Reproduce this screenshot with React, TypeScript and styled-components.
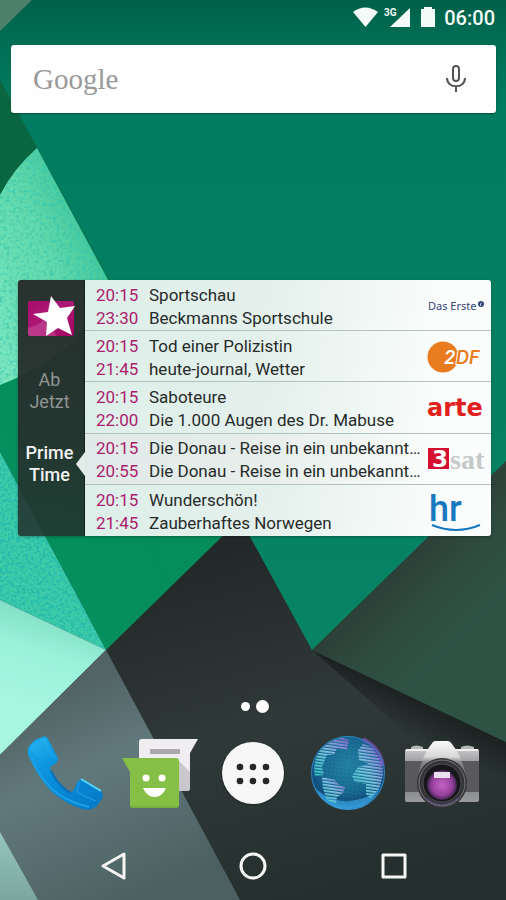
import React from 'react';
import styled, { createGlobalStyle } from 'styled-components';

const GlobalStyle = createGlobalStyle`
  *, *::before, *::after { box-sizing: border-box; }
  body { margin: 0; background: #2b3433; font-family: Roboto, "Liberation Sans", sans-serif; }
  button { border: 0; padding: 0; background: none; font: inherit; color: inherit; cursor: pointer; }
  svg { display: block; }
`;

const Screen = styled.div`
  position: relative;
  isolation: isolate;
  display: flex;
  flex-direction: column;
  min-height: 100vh;
  overflow: hidden;
`;

const WallpaperSvg = styled.svg`
  position: absolute;
  inset: 0;
  z-index: -1;
  width: 100%;
  height: 100%;
`;

const StatusBar = styled.header`
  display: flex;
  align-items: center;
  justify-content: flex-end;
  height: 36px;
  padding: 0 11px;
  color: #f4fbf8;
`;

const Clock = styled.time`
  margin-left: 8px;
  font-size: 20px;
  font-weight: 500;
  line-height: 24px;
`;

const SearchBar = styled.form`
  display: flex;
  align-items: center;
  height: 68px;
  margin: 9px 10px 0 11px;
  padding: 0 30px 0 22px;
  border-radius: 3px;
  background: #fefefe;
  box-shadow: 0 1px 2px rgba(0, 40, 25, 0.5);
`;

const SearchLabel = styled.label`
  color: #999;
  font-family: "Liberation Serif", serif;
  font-size: 29px;
  line-height: 36px;
`;

const SearchInput = styled.input`
  flex: 1;
  min-width: 0;
  height: 40px;
  border: 0;
  outline: 0;
  background: transparent;
  font: 18px Roboto, sans-serif;
`;

const Widget = styled.main`
  display: grid;
  grid-template-columns: 67px minmax(0, 1fr);
  min-height: 256px;
  margin: 167px 15px 0 18px;
  border-radius: 3px;
  box-shadow: 0 1px 3px rgba(0, 30, 20, 0.35);
`;

const Sidebar = styled.nav`
  display: flex;
  flex-direction: column;
  align-items: stretch;
  padding-top: 12px;
  border-right: 1px solid #14201c;
  border-radius: 3px 0 0 3px;
  background: linear-gradient(rgba(38, 44, 43, 0.97), rgba(39, 47, 45, 0.94) 50%, rgba(34, 50, 44, 0.86));
`;

const StarButton = styled.button`
  display: flex;
  justify-content: center;
  height: 50px;
`;

const PeriodButton = styled.button<{ $active?: boolean }>`
  position: relative;
  height: 44px;
  margin-top: ${(p) => (p.$active ? 29 : 27)}px;
  padding-right: 3px;
  color: ${(p) => (p.$active ? '#f3f3f3' : '#8f9593')};
  font-size: 18px;
  font-weight: ${(p) => (p.$active ? 500 : 400)};
  line-height: 22px;
  ${(p) =>
    p.$active &&
    `&::after {
      content: "";
      position: absolute;
      top: 10px;
      right: -1px;
      border: solid transparent;
      border-width: 12px 9px 12px 0;
      border-right-color: #e4ecea;
    }`}
`;

const Listings = styled.ul`
  display: grid;
  grid-auto-rows: 1fr;
  margin: 0;
  padding: 0;
  list-style: none;
`;

const Channel = styled.li`
  display: flex;
  align-items: center;
  min-width: 0;
  padding: 3px 4px 0 11px;
  border-bottom: 1px solid #b4c2be;
  background: linear-gradient(100deg, #deefe9, #e4f0ec 45%, #fafdfc 88%);
  &:first-child { border-top-right-radius: 3px; }
  &:nth-child(4) { background: linear-gradient(100deg, #e0eae8, #e7eeec 45%, #fafdfc 88%); }
  &:last-child { border-bottom: 0; border-bottom-right-radius: 3px; }
`;

const Programmes = styled.div`
  flex: 1;
  min-width: 0;
`;

const Programme = styled.div`
  display: flex;
  gap: 10px;
  font-size: 17px;
  line-height: 23px;
`;

const Start = styled.time`
  flex: none;
  width: 43px;
  color: #ab1c6d;
`;

const Title = styled.span`
  overflow: hidden;
  color: #262b2a;
  white-space: nowrap;
  text-overflow: ellipsis;
`;

const Pager = styled.div`
  display: flex;
  align-items: center;
  justify-content: center;
  gap: 6px;
  height: 14px;
  margin-top: auto;
  padding-left: 3px;
`;

const Dot = styled.span<{ $current?: boolean }>`
  width: ${(p) => (p.$current ? 13 : 9)}px;
  height: ${(p) => (p.$current ? 13 : 9)}px;
  border-radius: 50%;
  background: #fff;
`;

const Dock = styled.nav`
  display: grid;
  grid-template-columns: repeat(5, 1fr);
  justify-items: center;
  margin-top: 20px;
  padding: 0 18px;
`;

const NavBar = styled.nav`
  display: grid;
  grid-template-columns: repeat(3, 1fr);
  justify-items: center;
  align-items: center;
  height: 48px;
  margin-top: 29px;
  margin-bottom: 10px;
  padding: 0 42px;
`;

const Wallpaper = () => (
  <WallpaperSvg viewBox="0 0 506 900" preserveAspectRatio="none" aria-hidden="true">
    <defs>
      <linearGradient id="teal" x1="0" y1="0" x2="0" y2="1">
        <stop offset="0" stopColor="#005f49" />
        <stop offset=".06" stopColor="#006e55" />
        <stop offset=".17" stopColor="#007d61" />
        <stop offset="1" stopColor="#078464" />
      </linearGradient>
      <linearGradient id="mint" x1="0" y1="1" x2="1" y2="0">
        <stop offset="0" stopColor="#7ce8c2" />
        <stop offset=".5" stopColor="#62d9ac" />
        <stop offset="1" stopColor="#25b588" />
      </linearGradient>
      <linearGradient id="leaf" x1="0" y1="1" x2="1" y2="0">
        <stop offset="0" stopColor="#049160" />
        <stop offset=".6" stopColor="#058c59" />
        <stop offset="1" stopColor="#127346" />
      </linearGradient>
      <linearGradient id="pale" gradientUnits="userSpaceOnUse" x1="40" y1="615" x2="15" y2="700">
        <stop offset="0" stopColor="#84e0c6" />
        <stop offset=".4" stopColor="#9af2d9" />
        <stop offset="1" stopColor="#a6f6e0" />
      </linearGradient>
      <linearGradient id="slate" gradientUnits="userSpaceOnUse" x1="50" y1="700" x2="140" y2="900">
        <stop offset="0" stopColor="#526466" />
        <stop offset=".35" stopColor="#62797b" />
        <stop offset="1" stopColor="#4c6061" />
      </linearGradient>
      <linearGradient id="coal" gradientUnits="userSpaceOnUse" x1="200" y1="560" x2="290" y2="900">
        <stop offset="0" stopColor="#232929" />
        <stop offset=".5" stopColor="#2f3938" />
        <stop offset="1" stopColor="#25302e" />
      </linearGradient>
      <linearGradient id="moss" gradientUnits="userSpaceOnUse" x1="370" y1="590" x2="440" y2="660">
        <stop offset="0" stopColor="#2c3f37" />
        <stop offset=".4" stopColor="#2f4a3f" />
        <stop offset="1" stopColor="#2e5345" />
      </linearGradient>
      <linearGradient id="foldShade" gradientUnits="userSpaceOnUse" x1="410" y1="696" x2="394" y2="730">
        <stop offset="0" stopColor="#151b1a" stopOpacity=".75" />
        <stop offset="1" stopColor="#151b1a" stopOpacity="0" />
      </linearGradient>
      <linearGradient id="bottomLeft" x1="0" y1="0" x2="0" y2="1">
        <stop offset="0" stopColor="#94c5bb" />
        <stop offset="1" stopColor="#7ba69f" />
      </linearGradient>
      <filter id="grain" x="0" y="0" width="1" height="1">
        <feTurbulence type="fractalNoise" baseFrequency=".35" numOctaves="2" seed="4" />
        <feColorMatrix values="0 0 0 0 .02  0 0 0 0 .5  0 0 0 0 .4  0 4 0 0 -1.7" />
        <feComposite in2="SourceGraphic" operator="in" result="dark" />
        <feMerge>
          <feMergeNode in="SourceGraphic" />
          <feMergeNode in="dark" />
        </feMerge>
      </filter>
      <filter id="fineGrain" x="0" y="0" width="1" height="1">
        <feTurbulence type="fractalNoise" baseFrequency=".3" numOctaves="2" seed="9" />
        <feColorMatrix values="0 0 0 0 .02  0 0 0 0 .55  0 0 0 0 .42  0 2 0 0 -.9" />
        <feComposite in2="SourceGraphic" operator="in" result="dark" />
        <feMerge>
          <feMergeNode in="SourceGraphic" />
          <feMergeNode in="dark" />
        </feMerge>
      </filter>
    </defs>
    <rect width="506" height="900" fill="url(#coal)" />
    <path d="M312 650 506 742V820Z" fill="url(#foldShade)" />
    <path d="M312 650 506 460V742Z" fill="url(#moss)" />
    <path d="M0 0H506V461L312 650 0 80Z" fill="url(#teal)" />
    <path d="M0 0H32L0 31Z" fill="#4c8068" />
    <path d="M0 80 240 519 106 650 0 452Z" fill="url(#leaf)" />
    <path d="M0 80 37 148 0 195Z" fill="#0a6541" />
    <path d="M0 195Q14 168 37 148L108 280Q90 350 0 385Z" fill="url(#mint)" filter="url(#fineGrain)" />
    <path d="M0 452 106 650 0 600Z" fill="#3ccba8" filter="url(#grain)" />
    <path d="M0 600 106 650 0 755Z" fill="url(#pale)" />
    <path d="M106 650 240 900H0V755Z" fill="url(#slate)" />
    <path d="M0 832 38 900H0Z" fill="url(#bottomLeft)" />
  </WallpaperSvg>
);

const StatusIcons = () => (
  <svg width="84" height="24" viewBox="0 0 84 24" fill="currentColor" role="img" aria-label="WLAN, 3G, Akku">
    <path d="M1 6Q13 -3 26 6L13.500 21Z" />
    <text x="32" y="10" fontFamily="Roboto, sans-serif" fontSize="10" fontWeight="700">3G</text>
    <path d="M58 2V21H38Z" />
    <path d="M72 1H80V3H83V21H69V3H72Z" />
  </svg>
);

const MicIcon = () => (
  <svg width="20" height="28" viewBox="0 0 20 28" fill="none" stroke="#555" strokeWidth="2">
    <rect x="7" y="1" width="6" height="15" rx="3" />
    <path d="M1 13C1 24 19 24 19 13M10 21.500V27" />
  </svg>
);

const StarIcon = () => (
  <svg width="50" height="44" viewBox="0 0 50 44">
    <defs>
      <linearGradient id="star-card" x1="0" y1="0" x2="1" y2="1">
        <stop offset="0" stopColor="#a90b6c" />
        <stop offset=".5" stopColor="#ac1b76" />
        <stop offset="1" stopColor="#a1005e" />
      </linearGradient>
    </defs>
    <rect x="2" y="9" width="46" height="35" rx="2" fill="url(#star-card)" />
    <path d="M2 36Q17 32 23 22L30 44H4Q2 44 2 42Z" fill="#cc5aa1" opacity=".45" />
    <path d="M25 4 34 16 49 14 41 26 46 43 32 36 20 44 21 30 7 22 22 20Z" fill="#fff" />
  </svg>
);

const LogoSvg = styled.svg`
  flex: none;
  width: 60px;
  height: 46px;
  margin-left: 6px;
`;

const DasErste = () => (
  <LogoSvg viewBox="0 0 60 46" role="img" aria-label="Das Erste">
    <text x="1" y="26" fill="#34437a" fontFamily="'Noto Sans', sans-serif" fontSize="11">Das Erste</text>
    <circle cx="54" cy="20" r="3" fill="#34437a" />
    <path d="M53.500 22V19.500L54.500 19" fill="none" stroke="#fff" strokeWidth=".7" />
  </LogoSvg>
);

const Zdf = () => (
  <LogoSvg viewBox="0 0 60 46" role="img" aria-label="ZDF">
    <circle cx="16" cy="22" r="15.500" fill="#ea7c20" />
    <g fontFamily="Inter, sans-serif" fontSize="18" fontStyle="italic" fontWeight="600">
      <text x="29" y="29" fill="#ea7c20" stroke="#fff" strokeWidth="2" paintOrder="stroke">DF</text>
      <text x="17" y="29" fill="#fff">2</text>
    </g>
  </LogoSvg>
);

const Arte = () => (
  <LogoSvg viewBox="0 0 60 46" role="img" aria-label="arte">
    <text x="0" y="30" fill="#e2211c" fontFamily="'DejaVu Sans', sans-serif" fontSize="24" fontWeight="700">arte</text>
  </LogoSvg>
);

const DreiSat = () => (
  <LogoSvg viewBox="0 0 60 46" role="img" aria-label="3sat">
    <rect x="1" y="11" width="21" height="21" fill="#d50f30" />
    <text x="5" y="30" fill="#fff" fontFamily="'DejaVu Sans', sans-serif" fontSize="23" fontWeight="700">3</text>
    <text x="23" y="32" fill="#c6c9c9" fontFamily="'Liberation Serif', serif" fontSize="28" fontWeight="700">sat</text>
  </LogoSvg>
);

const Hr = () => (
  <LogoSvg viewBox="0 0 60 46" role="img" aria-label="hr">
    <text x="2" y="32" fill="#1878c0" fontFamily="Roboto, sans-serif" fontSize="36" fontWeight="500">hr</text>
    <path d="M5 36Q29 46 53 36" fill="none" stroke="#1878c0" strokeWidth="2" />
  </LogoSvg>
);

const PhoneIcon = () => (
  <svg width="80" height="80" viewBox="0 0 80 80">
    <defs>
      <linearGradient id="phone-body" x1="0" y1="0" x2="1" y2="1">
        <stop offset="0" stopColor="#16a8ec" />
        <stop offset=".5" stopColor="#078bd8" />
        <stop offset="1" stopColor="#0879c6" />
      </linearGradient>
      <linearGradient id="phone-face" x1="0" y1="0" x2="1" y2="1">
        <stop offset="0" stopColor="#45caf8" />
        <stop offset="1" stopColor="#0a93df" />
      </linearGradient>
    </defs>
    <path d="M18 4Q21 2 23 6L33 25Q33 29 30 31L25 34Q25 38 29 43L37 53Q43 59 47 59L50 55Q52 47 56 46Q59 46 76 58Q79 61 77 66L71 74Q65 78 57 76Q39 70 27 59Q16 48 9 34L3 22Q2 15 5 12Q11 5 18 4Z" fill="url(#phone-body)" />
    <path d="M18 5 7 12Q4 15 6 18L17 27 31 24 22 6Z" fill="url(#phone-face)" opacity=".4" />
    <path d="M19 5Q20 15 31 26M54 47 52 59Q62 65 71 68" fill="none" stroke="#2fb8f2" opacity=".6" />
    <path d="M4 20Q17 53 40 65Q51 71 64 74" fill="none" stroke="#1b9fe4" strokeWidth="2" />
    <path d="M56 46 76 58" stroke="#52d8fc" strokeWidth="2" />
    <path d="M26 38Q34 54 46 60" fill="none" stroke="#086fb8" strokeWidth="2" />
  </svg>
);

const MessageIcon = () => (
  <svg width="80" height="80" viewBox="0 0 80 80">
    <path d="M23 6H79L71 20V55Q71 58 68 58H23Q20 58 20 55V9Q20 6 23 6Z" fill="#efedef" />
    <path d="M60 28 71 39V55Q71 58 68 58H60Z" fill="#c9c7c9" />
    <rect x="31" y="16" width="30" height="5" fill="#aaa8aa" />
    <path d="M3 25H57Q60 25 60 28V72Q60 75 57 75H14Q11 75 11 72V39Z" fill="#86bf45" />
    <path d="M12 74H59" stroke="#6a9d35" />
    <circle cx="27" cy="45" r="3.500" fill="#fff" />
    <circle cx="43" cy="45" r="3.500" fill="#fff" />
    <path d="M24 55H47Q43 64 35.500 64T24 55Z" fill="#fff" />
  </svg>
);

const AppsIcon = () => (
  <svg width="80" height="80" viewBox="0 0 80 80">
    <circle cx="40" cy="41" r="32" fill="#1d2423" opacity=".5" />
    <circle cx="40" cy="40" r="31" fill="#f7f7f7" />
    {[34, 48].map((y) => [27, 40, 53].map((x) => <circle key={`${x}-${y}`} cx={x} cy={y} r="3.300" fill="#262626" />))}
  </svg>
);

const GlobeIcon = () => (
  <svg width="80" height="80" viewBox="0 0 80 80">
    <defs>
      <radialGradient id="sea" cx=".5" cy=".4" r=".6">
        <stop offset="0" stopColor="#217fa3" />
        <stop offset=".6" stopColor="#17678f" />
        <stop offset=".85" stopColor="#124a7b" />
        <stop offset="1" stopColor="#2c91cf" />
      </radialGradient>
      <linearGradient id="land" x1="0" y1="1" x2="1" y2="0">
        <stop offset="0" stopColor="#32d1c5" />
        <stop offset=".5" stopColor="#8ccce8" />
        <stop offset="1" stopColor="#a05ed8" />
      </linearGradient>
      <pattern id="stripes" width="4" height="3" patternUnits="userSpaceOnUse" patternTransform="rotate(8)">
        <rect width="4" height="1.700" fill="#fff" />
      </pattern>
      <pattern id="specks" width="4" height="4" patternUnits="userSpaceOnUse" patternTransform="rotate(8)">
        <circle cx="1" cy="1" r=".6" fill="#61c4dc" />
      </pattern>
      <mask id="stripe-mask"><rect width="80" height="80" fill="url(#stripes)" /></mask>
    </defs>
    <circle cx="41" cy="40" r="37" fill="url(#sea)" />
    <circle cx="41" cy="40" r="35" fill="url(#specks)" opacity=".35" />
    <path d="M9 56Q24 70 43 68T73 55Q62 75 41 76T9 56Z" fill="#3ba6e2" opacity=".7" />
    <g fill="url(#land)" mask="url(#stripe-mask)">
      <path d="M12 19Q20 8 35 5L42 7 40 17 30 15 27 22 20 22 15 34 17 42 8 43Q5 30 12 19Z" />
      <path d="M15 44 28 47 31 51 38 54 36 60 30 64 29 71 20 67 16 56Z" />
      <path d="M51 17 56 11 65 14 75 29 76 41 73 54 64 65 59 62 59 51 48 49 45 43 51 34 62 31 52 27Z" />
    </g>
    <path d="M56 6Q73 14 76 33" fill="none" stroke="#8c50ca" strokeWidth="4" opacity=".6" />
    <circle cx="41" cy="40" r="36.500" fill="none" stroke="#3a98d4" opacity=".7" />
  </svg>
);

const CameraIcon = () => (
  <svg width="80" height="80" viewBox="0 0 80 80">
    <defs>
      <linearGradient id="metal" x1="0" y1="0" x2="0" y2="1">
        <stop offset="0" stopColor="#c7c7c9" />
        <stop offset=".5" stopColor="#737476" />
        <stop offset="1" stopColor="#9a9b9d" />
      </linearGradient>
      <linearGradient id="prism" x1="0" y1="0" x2="0" y2="1">
        <stop offset="0" stopColor="#fafafa" />
        <stop offset=".3" stopColor="#d7d7d8" />
        <stop offset=".4" stopColor="#858688" />
        <stop offset="1" stopColor="#4a4a4d" />
      </linearGradient>
      <radialGradient id="glass">
        <stop offset="0" stopColor="#c263c2" />
        <stop offset=".7" stopColor="#96409c" />
        <stop offset="1" stopColor="#40244b" />
      </radialGradient>
    </defs>
    <path d="M10 17V14Q15 11 22 14V17M60 17V14Q66 11 73 14V17" fill="#b7b7b9" />
    <rect x="4" y="16" width="74" height="53" rx="2" fill="url(#metal)" />
    <rect x="4" y="28" width="74" height="31" fill="#59595d" />
    <path d="M5 17H77" stroke="#efefef" strokeWidth="2" />
    <path d="M17 42Q22 21 32 9Q33 8 35 8H47Q49 8 51 11Q61 24 65 42L60 61H22Z" fill="url(#prism)" />
    <circle cx="41" cy="50" r="25" fill="#353539" />
    <circle cx="41" cy="50" r="23" fill="none" stroke="#77777c" />
    <circle cx="41" cy="50" r="19" fill="#17171b" stroke="#4d4d53" />
    <circle cx="41" cy="52" r="15" fill="url(#glass)" />
    <path d="M33 39H49V45H33Z" fill="#eadfed" />
    <path d="M24 65Q40 79 58 65" fill="none" stroke="#635389" strokeWidth="1" />
  </svg>
);

const NavIcon = ({ d }: { d: string }) => (
  <svg width="32" height="32" viewBox="0 0 32 32" fill="none" stroke="#f5f5f5" strokeWidth="3" strokeLinejoin="round">
    <path d={d} />
  </svg>
);

const channels = [
  { logo: <DasErste />, shows: [['20:15', 'Sportschau'], ['23:30', 'Beckmanns Sportschule']] },
  { logo: <Zdf />, shows: [['20:15', 'Tod einer Polizistin'], ['21:45', 'heute-journal, Wetter']] },
  { logo: <Arte />, shows: [['20:15', 'Saboteure'], ['22:00', 'Die 1.000 Augen des Dr. Mabuse']] },
  { logo: <DreiSat />, shows: [['20:15', 'Die Donau - Reise in ein unbekannt…'], ['20:55', 'Die Donau - Reise in ein unbekannt…']] },
  { logo: <Hr />, shows: [['20:15', 'Wunderschön!'], ['21:45', 'Zauberhaftes Norwegen']] },
];

const apps = [
  { name: 'Telefon', icon: <PhoneIcon /> },
  { name: 'Nachrichten', icon: <MessageIcon /> },
  { name: 'Alle Apps', icon: <AppsIcon /> },
  { name: 'Browser', icon: <GlobeIcon /> },
  { name: 'Kamera', icon: <CameraIcon /> },
];

const navigation = [
  { name: 'Zurück', d: 'M7 16 28 4V28Z' },
  { name: 'Startseite', d: 'M28 16A12 12 0 1 1 4 16A12 12 0 1 1 28 16Z' },
  { name: 'Übersicht', d: 'M5 5H27V27H5Z' },
];

export default function App() {
  return (
    <>
      <GlobalStyle />
      <Screen>
        <Wallpaper />
        <StatusBar>
          <StatusIcons />
          <Clock>06:00</Clock>
        </StatusBar>
        <SearchBar role="search" onSubmit={(e) => e.preventDefault()}>
          <SearchLabel htmlFor="search">Google</SearchLabel>
          <SearchInput id="search" type="text" />
          <button type="button" aria-label="Sprachsuche"><MicIcon /></button>
        </SearchBar>
        <Widget>
          <Sidebar>
            <StarButton aria-label="TV-Programm"><StarIcon /></StarButton>
            <PeriodButton>Ab<br />Jetzt</PeriodButton>
            <PeriodButton $active>Prime<br />Time</PeriodButton>
          </Sidebar>
          <Listings>
            {channels.map((channel, i) => (
              <Channel key={i}>
                <Programmes>
                  {channel.shows.map(([start, title]) => (
                    <Programme key={start}>
                      <Start>{start}</Start>
                      <Title>{title}</Title>
                    </Programme>
                  ))}
                </Programmes>
                {channel.logo}
              </Channel>
            ))}
          </Listings>
        </Widget>
        <Pager>
          <Dot />
          <Dot $current />
        </Pager>
        <Dock>
          {apps.map((app) => (
            <button key={app.name} aria-label={app.name}>{app.icon}</button>
          ))}
        </Dock>
        <NavBar>
          {navigation.map((item) => (
            <button key={item.name} aria-label={item.name}><NavIcon d={item.d} /></button>
          ))}
        </NavBar>
      </Screen>
    </>
  );
}
